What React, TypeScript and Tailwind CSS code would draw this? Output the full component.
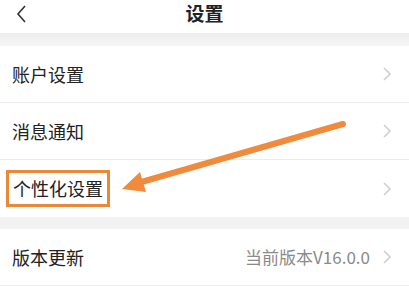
import React from 'react';

const font = { fontFamily: '"Noto Sans CJK SC", "Noto Sans", sans-serif' };

function Chevron() {
  return (
    <svg width="10" height="16" viewBox="0 0 10 16" className="shrink-0">
      <path d="M2 2 L8 8 L2 14" fill="none" stroke="#cfcfcf" strokeWidth="1.6" />
    </svg>
  );
}

function Row({ label, value, boxed }: { label: string; value?: string; boxed?: boolean }) {
  return (
    <div className="h-[57px] flex items-center justify-between pl-3 pr-[17px] border-b border-[#ececec] bg-white">
      {boxed ? (
        <div className="-ml-[6px] h-[37px] px-[4px] flex items-center border-[3px] border-[#e8893a]">
          <span className="text-[18px] text-[#222]">{label}</span>
        </div>
      ) : (
        <span className="text-[18px] text-[#222]">{label}</span>
      )}
      <div className="flex items-center gap-3">
        {value && <span className="text-[17px] text-[#8a8a8a]">{value}</span>}
        <Chevron />
      </div>
    </div>
  );
}

export default function App() {
  return (
    <div className="relative w-[409px] h-[308px] overflow-hidden bg-white" style={font}>
      <div className="h-[33px] flex items-start justify-center relative">
        <svg width="14" height="18" viewBox="0 0 14 18" className="absolute left-[14px] top-[5px]">
          <path d="M11 1 L4 9 L11 17" fill="none" stroke="#333" strokeWidth="1.6" />
        </svg>
        <span className="text-[19px] leading-[25px] font-bold text-[#222]">设置</span>
      </div>
      <div className="h-[13px] bg-gradient-to-b from-[#ededed] to-[#f6f6f6]" />
      <Row label="账户设置" />
      <Row label="消息通知" />
      <div className="[&>div]:border-b-0">
        <Row label="个性化设置" boxed />
      </div>
      <div className="h-[12px] bg-[#f2f2f2]" />
      <Row label="版本更新" value="当前版本V16.0.0" />
      <div className="h-[30px] bg-white" />

      <svg className="absolute left-0 top-0 pointer-events-none" width="409" height="308">
        <line x1="343" y1="124" x2="138" y2="183" stroke="#f08a3c" strokeWidth="6" strokeLinecap="round" />
        <polygon points="122,189 140,172 146,192" fill="#f08a3c" />
      </svg>
    </div>
  );
}
